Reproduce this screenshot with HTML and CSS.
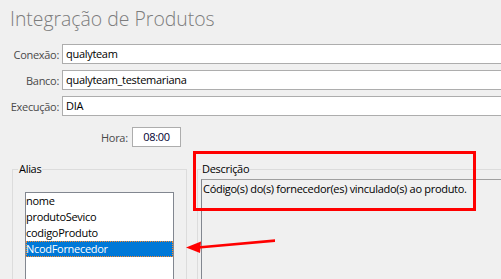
FILE: index.html
```html
<!DOCTYPE html>
<html lang="pt">
<head>
<meta charset="utf-8">
<link rel="stylesheet" href="styles.css">
</head>
<body>
<div class="page">
  <h1 class="title">Integração de Produtos</h1>
  <div class="form">
    <div class="row"><span class="label">Conexão:</span><span class="field">qualyteam</span></div>
    <div class="row"><span class="label">Banco:</span><span class="field">qualyteam_testemariana</span></div>
    <div class="row"><span class="label">Execução:</span><span class="field">DIA</span></div>
  </div>
  <div class="hora-row"><span class="hora-label">Hora:</span><span class="hora-field">08:00</span></div>
  <div class="groups">
    <fieldset class="group alias">
      <legend class="legend">Alias</legend>
      <ul class="listbox">
        <li class="item">nome</li>
        <li class="item">produtoSevico</li>
        <li class="item">codigoProduto</li>
        <li class="item selected">NcodFornecedor</li>
      </ul>
    </fieldset>
    <fieldset class="group desc">
      <legend class="legend">Descrição</legend>
      <div class="descbox">Código(s) do(s) fornecedor(es) vinculado(s) ao produto.</div>
    </fieldset>
  </div>
  <div class="highlight"></div>
  <svg class="arrow" width="100" height="20" viewBox="0 0 100 20">
    <path d="M89 1.2 L12 8.2 L12 10.8 L89 4.0 Z" fill="#f00"/>
    <path d="M0 9.5 L15 3.5 L14 15 Z" fill="#f00"/>
  </svg>
</div>
</body>
</html>
```
FILE: styles.css
```css
html, body {
  margin: 0;
  padding: 0;
  background: #f0f0f0;
  overflow: hidden;
}
.page {
  position: relative;
  width: 501px;
  height: 279px;
  overflow: hidden;
  font-family: "Open Sans", "Noto Sans", sans-serif;
  font-size: 11px;
  letter-spacing: -0.3px;
  color: #000;
}
.title {
  margin: 0;
  padding: 5px 0 0 10px;
  height: 44px;
  box-sizing: border-box;
  font-weight: 300;
  font-size: 19.4px;
  letter-spacing: 0;
  line-height: 28px;
  color: #7c7c7c;
}
.form {
  display: flex;
  flex-direction: column;
  gap: 6px;
}
.row {
  display: flex;
  align-items: center;
  height: 20px;
}
.label {
  width: 59px;
  text-align: right;
  padding-right: 3px;
  color: #4a4a4a;
  flex: none;
}
.field {
  flex: 1;
  height: 20px;
  box-sizing: border-box;
  margin-right: -10px;
  border: 1px solid #adadad;
  background: #fff;
  padding-left: 3px;
  line-height: 18px;
}
.hora-row {
  display: flex;
  align-items: center;
  margin-top: 11px;
  height: 20px;
  padding-left: 101px;
}
.hora-label {
  color: #4a4a4a;
  width: 29px;
}
.hora-field {
  margin-left: 2px;
  width: 49px;
  height: 20px;
  box-sizing: border-box;
  border: 1px solid #adadad;
  background: #fff;
  text-align: center;
  line-height: 18px;
  color: #000030;
}
.groups {
  display: flex;
  gap: 10px;
  margin-top: 14px;
  padding-left: 12px;
}
.group {
  margin: 0;
  border: 1px solid #dcdcdc;
  padding: 0 0 0 5px;
  min-width: 0;
  height: 140px;
}
.legend {
  padding: 0 1px;
  line-height: 16px;
}
.alias {
  width: 175px;
  box-sizing: border-box;
  flex: none;
}
.desc {
  flex: 1;
  margin-right: -10px;
  padding-left: 3px;
}
.listbox {
  list-style: none;
  margin: 15px 0 0 7px;
  padding: 0;
  width: 149px;
  height: 100px;
  box-sizing: border-box;
  border: 1px solid #828790;
  background: #fff;
}
.item {
  height: 16px;
  line-height: 16px;
  padding-left: 0;
}
.selected {
  background: #0078d7;
  color: #fff;
  outline: 1px dotted #ff8a28;
  outline-offset: -1px;
}
.descbox {
  margin-top: 2px;
  height: 100px;
  border-top: 1px solid #a0a0a0;
  border-left: 1px solid #828790;
  padding: 1px 0 0 1px;
  line-height: 15px;
  white-space: nowrap;
}
.highlight {
  position: absolute;
  left: 193px;
  top: 151px;
  width: 283px;
  height: 60px;
  box-sizing: border-box;
  border: 3px solid #f00;
}
.arrow {
  position: absolute;
  left: 186px;
  top: 238px;
}
```
